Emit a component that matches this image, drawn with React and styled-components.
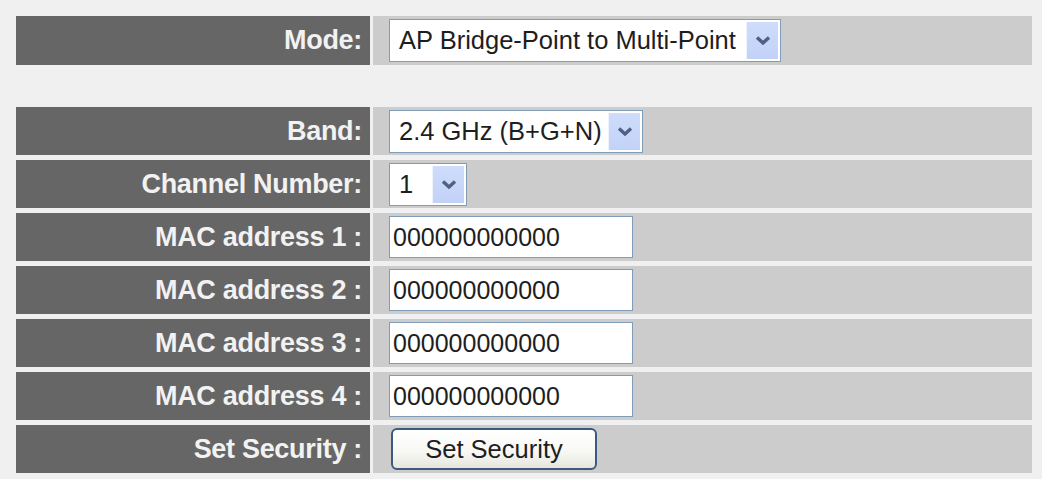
import React from 'react';
import styled, { createGlobalStyle } from 'styled-components';

const GlobalStyle = createGlobalStyle`
    html, body {
        margin: 0;
        padding: 0;
        background: #f0f0f0;
    }
    body {
        font-family: "Liberation Sans", Arial, sans-serif;
    }
`;

const Page = styled.div`
    width: 1042px;
    height: 479px;
    box-sizing: border-box;
    padding: 16px 10px 0 16px;
    display: flex;
    flex-direction: column;
    gap: 42px;
`;

const Table = styled.div`
    display: flex;
    flex-direction: column;
    gap: 5px;
`;

const Row = styled.div`
    display: grid;
    grid-template-columns: 354px 659px;
    column-gap: 3px;
    height: ${(p) => p.$height || 48}px;
`;

const Label = styled.div`
    background: #666666;
    color: #f2f2f2;
    font-weight: bold;
    font-size: 27px;
    letter-spacing: -0.3px;
    display: flex;
    align-items: center;
    justify-content: flex-end;
    padding-right: 8px;
`;

const Value = styled.div`
    background: #cccccc;
    display: flex;
    align-items: center;
    padding-left: 16px;
`;

const SelectBox = styled.div`
    box-sizing: border-box;
    width: ${(p) => p.$width}px;
    height: 43px;
    border: 1px solid #7f9db9;
    background: #fff;
    display: flex;
    align-items: stretch;
    padding: 2px;
`;

const SelectText = styled.span`
    flex: 1;
    font-size: 25.5px;
    color: #1e1e1e;
    padding-left: 7px;
    display: flex;
    align-items: center;
    white-space: nowrap;
`;

const DropButton = styled.span`
    width: 31px;
    background: linear-gradient(180deg, #cfdcfb 0%, #c2d2f7 100%);
    border-left: 1px solid #eef3fd;
    display: flex;
    align-items: center;
    justify-content: center;
`;

const TextInput = styled.div`
    box-sizing: border-box;
    width: 244px;
    height: 42px;
    border: 1px solid #7f9db9;
    background: #fff;
    font-size: 25px;
    color: #1e1e1e;
    padding-left: 3px;
    display: flex;
    align-items: center;
`;

const Button = styled.div`
    box-sizing: border-box;
    margin-left: 2px;
    width: 206px;
    height: 42px;
    border: 2px solid #3c5a80;
    border-radius: 6px;
    background: linear-gradient(180deg, #ffffff 0%, #f7f7f3 60%, #e6e5de 100%);
    font-size: 25.5px;
    color: #1e1e1e;
    display: flex;
    align-items: center;
    justify-content: center;
`;

const Chevron = () => (
    <svg width="16" height="11" viewBox="0 0 16 11">
        <path d="M2 2.5 L8 8 L14 2.5" fill="none" stroke="#4d6185" strokeWidth="3.4" />
    </svg>
);

const Select = ({ width, children }) => (
    <SelectBox $width={width}>
        <SelectText>{children}</SelectText>
        <DropButton>
            <Chevron />
        </DropButton>
    </SelectBox>
);

const macs = ['MAC address 1 :', 'MAC address 2 :', 'MAC address 3 :', 'MAC address 4 :'];

export default function App() {
    return (
        <>
            <GlobalStyle />
            <Page>
                <Table>
                    <Row $height={49}>
                        <Label>Mode:</Label>
                        <Value>
                            <Select width={392}>AP Bridge-Point to Multi-Point</Select>
                        </Value>
                    </Row>
                </Table>
                <Table>
                    <Row>
                        <Label>Band:</Label>
                        <Value>
                            <Select width={254}>2.4 GHz (B+G+N)</Select>
                        </Value>
                    </Row>
                    <Row>
                        <Label>Channel Number:</Label>
                        <Value>
                            <Select width={78}>1</Select>
                        </Value>
                    </Row>
                    {macs.map((m) => (
                        <Row key={m}>
                            <Label>{m}</Label>
                            <Value>
                                <TextInput>000000000000</TextInput>
                            </Value>
                        </Row>
                    ))}
                    <Row>
                        <Label>Set Security :</Label>
                        <Value>
                            <Button>Set Security</Button>
                        </Value>
                    </Row>
                </Table>
            </Page>
        </>
    );
}
